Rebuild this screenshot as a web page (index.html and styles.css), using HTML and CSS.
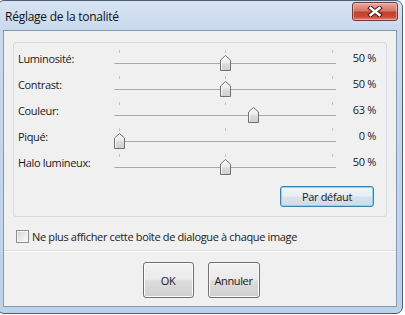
FILE: index.html
```html
<!DOCTYPE html>
<html lang="fr">
<head>
<meta charset="utf-8">
<title>Réglage de la tonalité</title>
<link rel="stylesheet" href="styles.css">
</head>
<body>
<div class="window">
  <div class="titlebar">
    <span class="title">Réglage de la tonalité</span>
    <div class="close">
      <svg width="16" height="11" viewBox="0 0 16 11">
        <path d="M3.5 2 L12.5 9 M12.5 2 L3.5 9" stroke="#4a1c1c" stroke-width="4.4" stroke-linecap="square" fill="none"/>
        <path d="M3.5 2 L12.5 9 M12.5 2 L3.5 9" stroke="#ffffff" stroke-width="2.4" stroke-linecap="square" fill="none"/>
      </svg>
    </div>
  </div>
  <div class="client">
    <div class="top">
      <div class="group">
        <div class="row">
          <span class="label">Luminosité:</span>
          <div class="slider">
            <i class="tick t0"></i><i class="tick t1"></i><i class="tick t2"></i>
            <div class="track"></div>
            <svg class="thumb" style="left:106px" width="11" height="16" viewBox="0 0 11 16"><use href="#thumb"/></svg>
          </div>
          <span class="val">50 %</span>
        </div>
        <div class="row">
          <span class="label">Contrast:</span>
          <div class="slider">
            <i class="tick t0"></i><i class="tick t1"></i><i class="tick t2"></i>
            <div class="track"></div>
            <svg class="thumb" style="left:106px" width="11" height="16" viewBox="0 0 11 16"><use href="#thumb"/></svg>
          </div>
          <span class="val">50 %</span>
        </div>
        <div class="row">
          <span class="label">Couleur:</span>
          <div class="slider">
            <i class="tick t0"></i><i class="tick t1"></i><i class="tick t2"></i>
            <div class="track"></div>
            <svg class="thumb" style="left:134px" width="11" height="16" viewBox="0 0 11 16"><use href="#thumb"/></svg>
          </div>
          <span class="val">63 %</span>
        </div>
        <div class="row">
          <span class="label">Piqué:</span>
          <div class="slider">
            <i class="tick t0"></i><i class="tick t1"></i><i class="tick t2"></i>
            <div class="track"></div>
            <svg class="thumb" style="left:0px" width="11" height="16" viewBox="0 0 11 16"><use href="#thumb"/></svg>
          </div>
          <span class="val">0 %</span>
        </div>
        <div class="row">
          <span class="label">Halo lumineux:</span>
          <div class="slider">
            <i class="tick t0"></i><i class="tick t1"></i><i class="tick t2"></i>
            <div class="track"></div>
            <svg class="thumb" style="left:106px" width="11" height="16" viewBox="0 0 11 16"><use href="#thumb"/></svg>
          </div>
          <span class="val">50 %</span>
        </div>
        <div class="actions">
          <div class="btn default">Par défaut</div>
        </div>
      </div>
      <div class="check">
        <span class="box"></span>
        <span class="check-text">Ne plus afficher cette boîte de dialogue à chaque image</span>
      </div>
    </div>
    <div class="bottom">
      <div class="btn big ok">OK</div>
      <div class="btn big cancel">Annuler</div>
    </div>
  </div>
</div>
<svg class="defs" width="0" height="0">
  <defs>
    <linearGradient id="tg" x1="0" y1="0" x2="0" y2="1">
      <stop offset="0" stop-color="#f7f7f7"/>
      <stop offset="0.45" stop-color="#ececec"/>
      <stop offset="0.55" stop-color="#dcdcdc"/>
      <stop offset="1" stop-color="#d0d0d0"/>
    </linearGradient>
    <g id="thumb">
      <path d="M0.5 15.5 L0.5 5 L5.5 0.5 L10.5 5 L10.5 15.5 Z" fill="url(#tg)" stroke="#707070" stroke-width="1"/>
      <path d="M1.5 14.5 L1.5 5.4 L5.5 1.8" fill="none" stroke="#ffffff" stroke-width="1" opacity="0.8"/>
    </g>
  </defs>
</svg>
</body>
</html>
```

FILE: styles.css
```css
* { box-sizing: border-box; }

html, body {
  margin: 0;
  padding: 0;
  background: #ffffff;
}

body {
  font-family: "Open Sans", "Noto Sans", sans-serif;
  font-size: 11px;
  letter-spacing: -0.35px;
  color: #1a1a1a;
  overflow: hidden;
}

.defs {
  position: absolute;
  width: 0;
  height: 0;
}

.window {
  margin-left: -3px;
  width: 406px;
  height: 314px;
  border: 1px solid #4f5f73;
  border-radius: 7px;
  background: linear-gradient(to bottom, #d6e3f2 0px, #c9d9ec 30px, #bdd1e8 100%);
  padding: 0 5px 6px 5px;
  display: flex;
  flex-direction: column;
}

.titlebar {
  height: 29px;
  display: flex;
  justify-content: space-between;
  align-items: flex-start;
  padding-left: 7px;
  margin-left: -5px;
  margin-right: -5px;
  padding-right: 4px;
}

.title {
  font-size: 12px;
  letter-spacing: -0.25px;
  line-height: 16px;
  margin-top: 8px;
  color: #111;
}

.close {
  width: 46px;
  height: 19px;
  margin-top: 1px;
  border: 1px solid #6d3a38;
  border-radius: 3px;
  background: linear-gradient(to bottom, #eaa798 0%, #d6786a 45%, #c4402c 55%, #c84b36 80%, #dc8470 100%);
  box-shadow: inset 0 0 0 1px rgba(255,210,200,0.55);
  display: flex;
  align-items: center;
  justify-content: center;
}

.client {
  flex: 1;
  background: #f0f0f0;
  border: 1px solid #8399b5;
  display: flex;
  flex-direction: column;
}

.top {
  padding: 11px 9px 7px 9px;
}

.group {
  border: 1px solid #d5dbe0;
  border-radius: 3px;
  padding: 4px 10px 9px 4px;
}

.row {
  height: 26px;
  display: flex;
  align-items: flex-start;
}

.label {
  width: 96px;
  line-height: 24px;
  white-space: nowrap;
}

.slider {
  position: relative;
  width: 222px;
  height: 26px;
}

.tick {
  position: absolute;
  top: 3px;
  width: 1px;
  height: 3px;
  background: #c4c4c4;
}
.t0 { left: 5px; }
.t1 { left: 111px; }
.t2 { left: 218px; }

.track {
  position: absolute;
  top: 16px;
  left: 0;
  right: 0;
  height: 1px;
  background: #a9a9a9;
  border-left: 1px solid #c8c8c8;
}

.thumb {
  position: absolute;
  top: 8px;
}

.val {
  width: 40px;
  text-align: right;
  line-height: 22px;
  white-space: nowrap;
}

.actions {
  display: flex;
  justify-content: flex-end;
  margin-top: 9px;
  padding-right: 2px;
}

.btn {
  border: 1px solid #707070;
  border-radius: 3px;
  background: linear-gradient(to bottom, #f2f2f2 0%, #ebebeb 48%, #dddddd 52%, #cfcfcf 100%);
  box-shadow: inset 0 0 0 1px #fbfbfb;
  display: flex;
  align-items: center;
  justify-content: center;
  white-space: nowrap;
}

.default {
  width: 94px;
  height: 21px;
  border-color: #3c7fb1;
  box-shadow: inset 0 0 0 1px #7fd8f5;
  background: linear-gradient(to bottom, #f0f5f8 0%, #e6eef3 48%, #d8e3ea 52%, #cfdce6 100%);
}

.check {
  display: flex;
  align-items: center;
  margin-top: 13px;
  margin-left: 3px;
  height: 13px;
}

.box {
  width: 13px;
  height: 13px;
  border: 1px solid #8e8f8f;
  background: linear-gradient(135deg, #cfd2d6 0%, #eeeeee 60%, #fbfbfb 100%);
  box-shadow: inset 0 0 0 1px #f4f4f4;
  margin-right: 3px;
}

.check-text {
  line-height: 13px;
}

.bottom {
  flex: 1;
  border-top: 1px solid #dfdfdf;
  box-shadow: inset 0 1px 0 #ffffff;
  display: flex;
  justify-content: center;
  gap: 14px;
  padding: 11px 0 8px 2px;
}

.big {
  height: 36px;
}
.ok { width: 51px; }
.cancel { width: 52px; }
```
